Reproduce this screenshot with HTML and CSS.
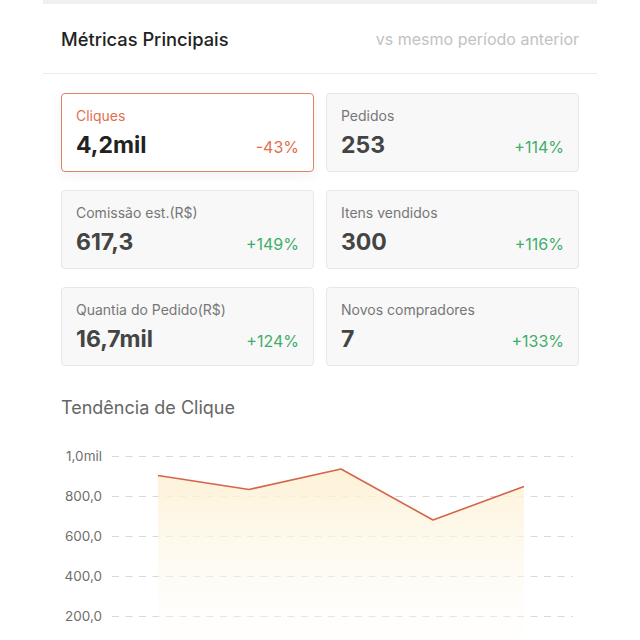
FILE: index.html
```html
<!DOCTYPE html>
<html lang="pt">
<head>
  <meta http-equiv="Content-Type" content="text/html; charset=UTF-8">
  <title>Métricas</title>
  <link rel="stylesheet" href="styles.css">
</head>
<body>
  <div class="page">
    <div class="strip"></div>
    <div class="header">
      <span class="title">Métricas Principais</span>
      <span class="compare">vs mesmo período anterior</span>
    </div>
    <div class="grid">
      <div class="card active">
        <div class="label">Cliques</div>
        <div class="row"><span class="value">4,2mil</span><span class="delta down">-43%</span></div>
      </div>
      <div class="card">
        <div class="label">Pedidos</div>
        <div class="row"><span class="value">253</span><span class="delta up">+114%</span></div>
      </div>
      <div class="card">
        <div class="label">Comissão est.(R$)</div>
        <div class="row"><span class="value">617,3</span><span class="delta up">+149%</span></div>
      </div>
      <div class="card">
        <div class="label">Itens vendidos</div>
        <div class="row"><span class="value">300</span><span class="delta up">+116%</span></div>
      </div>
      <div class="card">
        <div class="label">Quantia do Pedido(R$)</div>
        <div class="row"><span class="value">16,7mil</span><span class="delta up">+124%</span></div>
      </div>
      <div class="card">
        <div class="label">Novos compradores</div>
        <div class="row"><span class="value">7</span><span class="delta up">+133%</span></div>
      </div>
    </div>
    <div class="chart-title">Tendência de Clique</div>
    <svg class="chart" width="554" height="220" viewBox="0 0 554 220">
      <defs>
        <linearGradient id="fill" x1="0" y1="0" x2="0" y2="1">
          <stop offset="0" stop-color="#fdf0d2" stop-opacity="0.9"/>
          <stop offset="1" stop-color="#ffffff" stop-opacity="0.2"/>
        </linearGradient>
      </defs>
      <g class="grid-lines">
        <line x1="69" y1="16.5" x2="530" y2="16.5"/>
        <line x1="69" y1="56.5" x2="530" y2="56.5"/>
        <line x1="69" y1="96.5" x2="530" y2="96.5"/>
        <line x1="69" y1="136.5" x2="530" y2="136.5"/>
        <line x1="69" y1="176.5" x2="530" y2="176.5"/>
      </g>
      <g class="axis">
        <text x="59" y="21">1,0mil</text>
        <text x="59" y="61">800,0</text>
        <text x="59" y="101">600,0</text>
        <text x="59" y="141">400,0</text>
        <text x="59" y="181">200,0</text>
      </g>
      <polygon fill="url(#fill)" points="115,35.5 206,49.5 298,29 390,80 481,46.5 481,220 115,220"/>
      <polyline class="trend" points="115,35.5 206,49.5 298,29 390,80 481,46.5"/>
    </svg>
  </div>
</body>
</html>
```

FILE: styles.css
```css
body {
  margin: 0;
  background: #fff;
  font-family: Inter, "Noto Sans", sans-serif;
  color: #222;
  overflow: hidden;
}
.page {
  width: 554px;
  margin: 0 auto;
}
.strip {
  height: 4px;
  background: #f0f0f0;
}
.header {
  display: flex;
  justify-content: space-between;
  align-items: center;
  height: 69px;
  padding: 0 18px;
  border-bottom: 1px solid #ebebeb;
}
.title {
  font-size: 18.3px;
  font-weight: 500;
  color: #222;
}
.compare {
  font-size: 16px;
  color: #c2c2c2;
}
.grid {
  display: grid;
  grid-template-columns: 1fr 1fr;
  gap: 18px 12px;
  padding: 19px 18px 0;
}
.card {
  height: 79px;
  box-sizing: border-box;
  padding: 12px 14px 0;
  background: #f8f8f8;
  border: 1px solid #e7e7e7;
  border-radius: 4px;
}
.card.active {
  background: #fff;
  border-color: #e08466;
  box-shadow: 0 3px 12px rgba(0, 0, 0, 0.06);
}
.label {
  font-size: 14px;
  line-height: 20px;
  color: #777;
}
.active .label {
  color: #df6f4f;
}
.row {
  display: flex;
  justify-content: space-between;
  align-items: baseline;
  margin-top: 4px;
}
.value {
  font-size: 23px;
  line-height: 30px;
  font-weight: 700;
  color: #444;
}
.active .value {
  color: #222;
}
.delta {
  font-size: 16px;
}
.delta.up {
  color: #3fad6b;
}
.delta.down {
  color: #df6f4f;
}
.chart-title {
  margin: 30px 18px 0;
  font-size: 18px;
  line-height: 24px;
  color: #666;
}
.chart {
  display: block;
  margin-top: 20px;
}
.grid-lines line {
  stroke: #d9d9d9;
  stroke-width: 1;
  stroke-dasharray: 7 6.5;
}
.axis text {
  font-size: 13.5px;
  fill: #6f6f6f;
  text-anchor: end;
}
.trend {
  fill: none;
  stroke: #d4644a;
  stroke-width: 1.6;
  stroke-linejoin: round;
}
```
